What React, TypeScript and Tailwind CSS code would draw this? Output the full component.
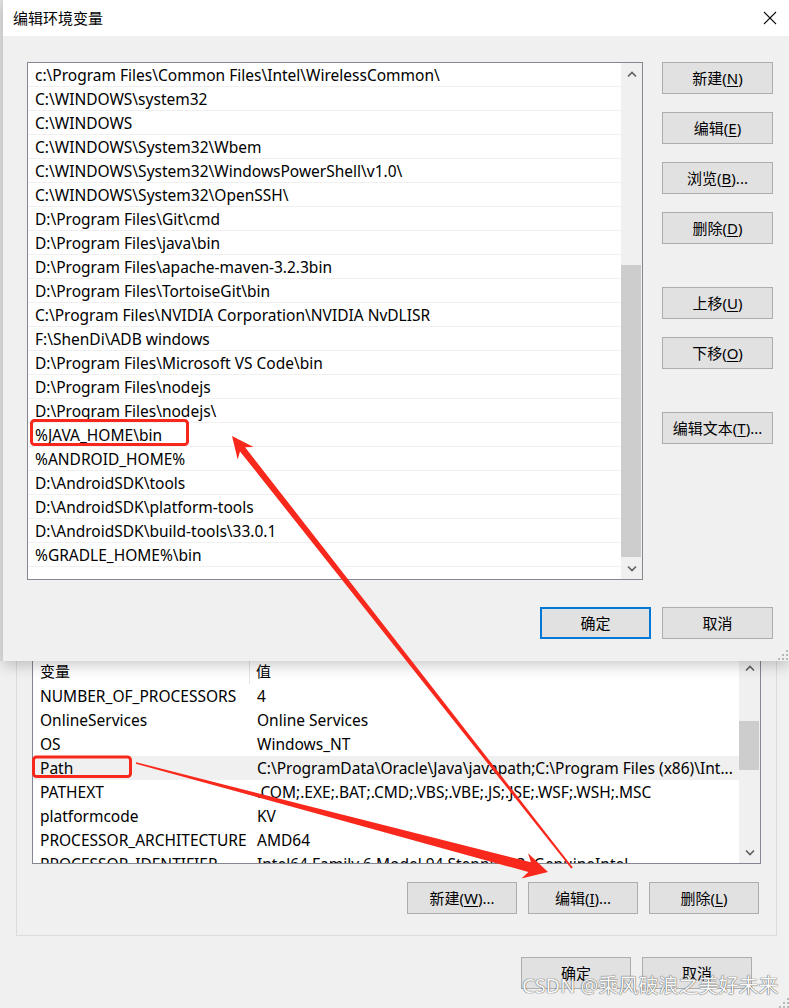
import React from "react";

const pathItems = [
  "c:\\Program Files\\Common Files\\Intel\\WirelessCommon\\",
  "C:\\WINDOWS\\system32",
  "C:\\WINDOWS",
  "C:\\WINDOWS\\System32\\Wbem",
  "C:\\WINDOWS\\System32\\WindowsPowerShell\\v1.0\\",
  "C:\\WINDOWS\\System32\\OpenSSH\\",
  "D:\\Program Files\\Git\\cmd",
  "D:\\Program Files\\java\\bin",
  "D:\\Program Files\\apache-maven-3.2.3bin",
  "D:\\Program Files\\TortoiseGit\\bin",
  "C:\\Program Files\\NVIDIA Corporation\\NVIDIA NvDLISR",
  "F:\\ShenDi\\ADB windows",
  "D:\\Program Files\\Microsoft VS Code\\bin",
  "D:\\Program Files\\nodejs",
  "D:\\Program Files\\nodejs\\",
  "%JAVA_HOME\\bin",
  "%ANDROID_HOME%",
  "D:\\AndroidSDK\\tools",
  "D:\\AndroidSDK\\platform-tools",
  "D:\\AndroidSDK\\build-tools\\33.0.1",
  "%GRADLE_HOME%\\bin",
];

const envRows: [string, string][] = [
  ["NUMBER_OF_PROCESSORS", "4"],
  ["OnlineServices", "Online Services"],
  ["OS", "Windows_NT"],
  ["Path", "C:\\ProgramData\\Oracle\\Java\\javapath;C:\\Program Files (x86)\\Int..."],
  ["PATHEXT", ".COM;.EXE;.BAT;.CMD;.VBS;.VBE;.JS;.JSE;.WSF;.WSH;.MSC"],
  ["platformcode", "KV"],
  ["PROCESSOR_ARCHITECTURE", "AMD64"],
  ["PROCESSOR_IDENTIFIER", "Intel64 Family 6 Model 94 Stepping 3, GenuineIntel"],
];

function Chevron({ down }: { down?: boolean }) {
  return (
    <svg width="10" height="7" viewBox="0 0 10 7">
      <polyline
        points={down ? "1,1.5 5,5.5 9,1.5" : "1,5.5 5,1.5 9,5.5"}
        fill="none"
        stroke="#606060"
        strokeWidth="1.6"
      />
    </svg>
  );
}

function Grip() {
  return (
    <svg width="10" height="10" viewBox="0 0 10 10">
      <rect x="8" y="0" width="2" height="2" fill="#b8b8b8" />
      <rect x="4" y="4" width="2" height="2" fill="#b8b8b8" />
      <rect x="8" y="4" width="2" height="2" fill="#b8b8b8" />
      <rect x="0" y="8" width="2" height="2" fill="#b8b8b8" />
      <rect x="4" y="8" width="2" height="2" fill="#b8b8b8" />
      <rect x="8" y="8" width="2" height="2" fill="#b8b8b8" />
    </svg>
  );
}

function Btn({
  children,
  focused,
  w = "w-[111px]",
}: {
  children: React.ReactNode;
  focused?: boolean;
  w?: string;
}) {
  return (
    <div
      className={
        "h-[32px] flex items-center justify-center bg-[#e1e1e1] text-[15px] leading-none text-black whitespace-nowrap " +
        w +
        (focused ? " border-2 border-[#0078d7]" : " border border-[#adadad]")
      }
    >
      {children}
    </div>
  );
}

function U({ children }: { children: React.ReactNode }) {
  return <span className="underline underline-offset-2">{children}</span>;
}

function arrow(
  tx: number,
  ty: number,
  px: number,
  py: number,
  w0: number,
  w1: number,
  L: number,
  H: number,
  notch: number
) {
  const dx = px - tx;
  const dy = py - ty;
  const len = Math.hypot(dx, dy);
  const ux = dx / len;
  const uy = dy / len;
  const nx = -uy;
  const ny = ux;
  const bx = px - ux * L;
  const by = py - uy * L;
  const jx = px - ux * (L - notch);
  const jy = py - uy * (L - notch);
  const pts = [
    [tx + (nx * w0) / 2, ty + (ny * w0) / 2],
    [jx + (nx * w1) / 2, jy + (ny * w1) / 2],
    [bx + nx * H, by + ny * H],
    [px, py],
    [bx - nx * H, by - ny * H],
    [jx - (nx * w1) / 2, jy - (ny * w1) / 2],
    [tx - (nx * w0) / 2, ty - (ny * w0) / 2],
  ];
  return pts.map((p) => p.map((v) => v.toFixed(1)).join(",")).join(" ");
}

const RED = "#f8281c";

export default function App() {
  return (
    <div className="relative w-[789px] h-[1008px] overflow-hidden bg-[#f0f0f0] font-['Noto_Sans','Noto_Sans_CJK_SC',sans-serif] text-[15px] text-black">
      {/* Top dialog row */}
      <div className="relative z-10 flex h-[661px]">
        <div className="w-[3px] bg-[#e2e2e2]" />
        <div className="relative flex-1 flex flex-col shadow-[0_4px_14px_rgba(0,0,0,0.22)]">
          {/* Title bar */}
          <div className="h-[36px] bg-white flex items-center justify-between pl-[10px] pr-[12px]">
            <span className="text-[15px] leading-none">编辑环境变量</span>
            <svg width="14" height="14" viewBox="0 0 14 14">
              <line x1="1" y1="1" x2="13" y2="13" stroke="#111" strokeWidth="1.1" />
              <line x1="13" y1="1" x2="1" y2="13" stroke="#111" strokeWidth="1.1" />
            </svg>
          </div>
          {/* Body */}
          <div className="flex-1 bg-[#f0f0f0] pt-[26px] pl-[24px] pr-[16px]">
            <div className="flex">
              {/* Listbox */}
              <div className="w-[616px] h-[518px] border border-[#828790] bg-white flex">
                <div className="flex-1 overflow-hidden text-[15.5px]">
                  {pathItems.map((t, i) => (
                    <div
                      key={i}
                      className="h-[24px] leading-[24px] pl-[7px] border-b border-[#f0f0f0] whitespace-nowrap overflow-hidden"
                    >
                      {t}
                    </div>
                  ))}
                </div>
                <div className="w-[21px] bg-[#f0f0f0] flex flex-col">
                  <div className="h-[22px] flex items-center justify-center">
                    <Chevron />
                  </div>
                  <div className="h-[180px]" />
                  <div className="h-[292px] mr-[1px] bg-[#cdcdcd]" />
                  <div className="h-[22px] flex items-center justify-center">
                    <Chevron down />
                  </div>
                </div>
              </div>
              {/* Right buttons */}
              <div className="ml-[19px] flex flex-col">
                <Btn>
                  新建(<U>N</U>)
                </Btn>
                <div className="mt-[18px]">
                  <Btn>
                    编辑(<U>E</U>)
                  </Btn>
                </div>
                <div className="mt-[18px]">
                  <Btn>
                    浏览(<U>B</U>)...
                  </Btn>
                </div>
                <div className="mt-[18px]">
                  <Btn>
                    删除(<U>D</U>)
                  </Btn>
                </div>
                <div className="mt-[43px]">
                  <Btn>
                    上移(<U>U</U>)
                  </Btn>
                </div>
                <div className="mt-[18px]">
                  <Btn>
                    下移(<U>O</U>)
                  </Btn>
                </div>
                <div className="mt-[43px]">
                  <Btn>
                    编辑文本(<U>T</U>)...
                  </Btn>
                </div>
              </div>
            </div>
            <div className="mt-[27px] flex justify-end gap-[11px]">
              <Btn focused>确定</Btn>
              <Btn>取消</Btn>
            </div>
          </div>
          <div className="absolute right-[1px] bottom-[1px]">
            <Grip />
          </div>
        </div>
      </div>

      {/* Background dialog (environment variables) */}
      <div className="ml-[16px] w-[761px] border-l border-r border-b border-[#dcdcdc] pb-[21px]">
        <div className="ml-[15px] w-[729px] h-[203px] border-l border-r border-b border-[#828790] bg-white flex overflow-hidden text-[15.5px]">
          <div className="flex-1 overflow-hidden">
            <div className="h-[23px] flex">
              <div className="w-[217px] pl-[7px] border-r border-[#e5e5e5] leading-[20px] whitespace-nowrap text-[15px]">
                变量
              </div>
              <div className="pl-[6px] leading-[20px] text-[15px]">值</div>
            </div>
            {envRows.map(([k, v], i) => (
              <div
                key={i}
                className={
                  "h-[24px] flex leading-[25px] whitespace-nowrap " +
                  (k === "Path" ? "bg-[#f0f0f0]" : "")
                }
              >
                <div className="w-[218px] shrink-0 pl-[7px]">{k}</div>
                <div className="flex-1 pl-[6px] overflow-hidden">{v}</div>
              </div>
            ))}
          </div>
          <div className="w-[21px] bg-[#f0f0f0] flex flex-col">
            <div className="h-[16px] flex items-start justify-center pt-[4px]">
              <Chevron />
            </div>
            <div className="h-[44px]" />
            <div className="h-[49px] mr-[1px] bg-[#cdcdcd]" />
            <div className="flex-1" />
            <div className="h-[22px] flex items-center justify-center">
              <Chevron down />
            </div>
          </div>
        </div>
        <div className="mt-[18px] pr-[17px] flex justify-end gap-[11px]">
          <Btn w="w-[110px]">
            新建(<U>W</U>)...
          </Btn>
          <Btn w="w-[110px]">
            编辑(<U>I</U>)...
          </Btn>
          <Btn w="w-[110px]">
            删除(<U>L</U>)
          </Btn>
        </div>
      </div>
      <div className="mt-[21px] pr-[37px] flex justify-end gap-[11px]">
        <Btn w="w-[110px]">确定</Btn>
        <Btn w="w-[110px]">取消</Btn>
      </div>
      <div className="absolute right-0 bottom-0">
        <Grip />
      </div>

      {/* Watermark */}
      <div className="absolute left-[522px] top-[976px] z-30 text-[20px] leading-none text-[#f8f8f8] whitespace-nowrap [text-shadow:0_0_1px_#555,0_0_1px_#555]">
        CSDN @乘风破浪之美好未来
      </div>

      {/* Red annotations */}
      <svg
        className="absolute left-0 top-0 z-20 pointer-events-none"
        width="789"
        height="1008"
        viewBox="0 0 789 1008"
      >
        <rect x="31.5" y="420.5" width="156" height="24" rx="3" fill="none" stroke={RED} strokeWidth="3" />
        <rect x="33.5" y="757" width="97" height="19.5" rx="3" fill="none" stroke={RED} strokeWidth="3" />
        <polygon points={arrow(572, 868, 232, 436, 2, 6.5, 22, 10, 5)} fill={RED} />
        <polygon points={arrow(136, 763, 548, 872, 1.5, 10, 24, 13, 5)} fill={RED} />
      </svg>
    </div>
  );
}
